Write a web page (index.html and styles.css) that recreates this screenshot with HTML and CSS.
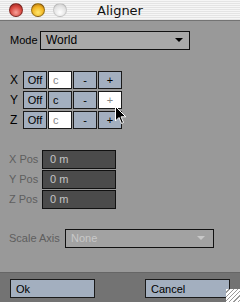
FILE: index.html
```html
<!DOCTYPE html>
<html lang="en">
<head>
  <meta charset="UTF-8">
  <title>Aligner</title>
  <link rel="stylesheet" href="styles.css">
</head>
<body>
  <div class="window">
    <!-- title bar -->
    <div class="titlebar">
      <div class="lights">
        <span class="light red"></span>
        <span class="light yellow"></span>
        <span class="light off"></span>
      </div>
      <div class="title">Aligner</div>
    </div>

    <div class="panel">
      <div class="row mode-row">
        <span class="label mode-label">Mode</span>
        <div class="select mode-select">
          <span>World</span>
          <span class="arrow"></span>
        </div>
      </div>

      <!-- axis buttons -->
      <div class="axes">
        <div class="row axis-row">
          <span class="label axis-label">X</span>
          <span class="btn">Off</span>
          <span class="btn left white dim">c</span>
          <span class="btn">-</span>
          <span class="btn">+</span>
        </div>
        <div class="row axis-row">
          <span class="label axis-label">Y</span>
          <span class="btn">Off</span>
          <span class="btn left">c</span>
          <span class="btn">-</span>
          <span class="btn white dim">+</span>
        </div>
        <div class="row axis-row">
          <span class="label axis-label">Z</span>
          <span class="btn">Off</span>
          <span class="btn left white dim">c</span>
          <span class="btn">-</span>
          <span class="btn">+</span>
        </div>
      </div>

      <!-- positions -->
      <div class="positions">
        <div class="row pos-row">
          <span class="label pos-label">X Pos</span>
          <span class="field">0 m</span>
        </div>
        <div class="row pos-row">
          <span class="label pos-label">Y Pos</span>
          <span class="field">0 m</span>
        </div>
        <div class="row pos-row">
          <span class="label pos-label">Z Pos</span>
          <span class="field">0 m</span>
        </div>
      </div>

      <div class="row scale-row">
        <span class="label scale-label">Scale Axis</span>
        <div class="select scale-select">
          <span>None</span>
          <span class="arrow"></span>
        </div>
      </div>
    </div>

    <div class="footer">
      <span class="btn wide">Ok</span>
      <span class="btn wide">Cancel</span>
      <span class="grip"></span>
    </div>

    <!-- mouse pointer -->
    <svg class="cursor" width="12" height="19" viewBox="0 0 12 19">
      <path d="M0.5 0.5 L0.5 15 L4 11.5 L6.5 17.5 L8.5 16.5 L6 10.8 L10.8 10.8 Z" fill="#000" stroke="#fff" stroke-width="1"/>
    </svg>
  </div>
</body>
</html>
```

FILE: styles.css
```css
* {
  box-sizing: border-box;
}
body {
  margin: 0;
  padding: 0;
  background: #999;
  font-family: 'Liberation Sans', sans-serif;
  font-size: 11px;
}
.window {
  position: relative;
  width: 240px;
  height: 302px;
  background: #999;
  display: flex;
  flex-direction: column;
  overflow: hidden;
}
/* title bar with pinstripes */
.titlebar {
  position: relative;
  height: 21px;
  background: repeating-linear-gradient(#f6f6f6 0, #f6f6f6 1px, #e4e4e4 1px, #e4e4e4 2px);
  border-bottom: 1px solid #737373;
  display: flex;
  align-items: center;
}
.lights {
  display: flex;
  gap: 8px;
  padding-left: 9px;
}
.light {
  width: 14px;
  height: 14px;
  border-radius: 50%;
  border: 1px solid rgba(0,0,0,0.35);
}
.red {
  background: radial-gradient(circle at 50% 70%, #f7a29a 0, #d8483f 55%, #8e1f1a 100%);
}
.yellow {
  background: radial-gradient(circle at 50% 70%, #ffe870 0, #f1b420 55%, #a0600c 100%);
}
.off {
  background: radial-gradient(circle at 50% 70%, #ffffff 0, #e2e2e2 60%, #c2c2c2 100%);
  border-color: rgba(0,0,0,0.12);
}
.title {
  position: absolute;
  left: 0;
  right: 0;
  text-align: center;
  font-family: 'DejaVu Sans', sans-serif;
  font-size: 13px;
  color: #111;
  top: 3px;
}
.panel {
  flex: 1;
  padding: 10px 0 0 9px;
  display: flex;
  flex-direction: column;
}
.row {
  display: flex;
  align-items: center;
  height: 18px;
}
.label {
  color: #000;
  flex-shrink: 0;
}
.mode-label {
  width: 31px;
  padding-left: 1px;
}
.select {
  height: 19px;
  border: 1px solid #111;
  background: #a9a9a9;
  display: flex;
  align-items: center;
  justify-content: space-between;
  padding: 0 5px 0 5px;
  font-size: 12px;
}
.mode-select {
  width: 150px;
  color: #000;
}
.arrow {
  width: 0;
  height: 0;
  border-left: 4px solid transparent;
  border-right: 4px solid transparent;
  border-top: 4px solid #000;
  margin-right: 1px;
}
.axes {
  margin-top: 22px;
  display: flex;
  flex-direction: column;
  gap: 2px;
}
.axis-row {
  gap: 1px;
}
.axis-label {
  width: 13px;
  padding-left: 1px;
  font-size: 12px;
}
.btn {
  width: 24px;
  height: 18px;
  border: 1px solid #1a1a1a;
  background: #a3afbf;
  display: flex;
  align-items: center;
  justify-content: center;
  color: #000;
  font-size: 11px;
}
.btn.left {
  justify-content: flex-start;
  padding-left: 4px;
}
.btn.white {
  background: #fff;
}
.btn.dim {
  color: #888;
}
.positions {
  margin-top: 21px;
  display: flex;
  flex-direction: column;
  gap: 2px;
}
.pos-label {
  width: 33px;
  color: #5e5e5e;
}
.field {
  width: 74px;
  height: 19px;
  border: 1px solid #111;
  background: #4b4b4b;
  color: #c4c4c4;
  padding-left: 7px;
  display: flex;
  align-items: center;
  font-size: 11px;
}
.scale-row {
  margin-top: 21px;
}
.scale-label {
  width: 56px;
  color: #5e5e5e;
}
.scale-select {
  width: 149px;
  background: #a2a2a2;
  color: #c8c8c8;
  font-size: 11px;
}
.scale-select .arrow {
  border-top-color: #c8c8c8;
  margin-right: 3px;
}
.footer {
  position: relative;
  height: 30px;
  background: #737373;
  border-top: 1px solid #666;
  display: flex;
  justify-content: space-between;
  padding: 6px 10px 0 10px;
}
.btn.wide {
  width: 85px;
  height: 19px;
  justify-content: flex-start;
  padding-left: 5px;
}
.grip {
  position: absolute;
  right: 0;
  bottom: 0;
  width: 14px;
  height: 13px;
  background: repeating-linear-gradient(135deg, #fff 0, #fff 2px, #9a9a9a 2px, #9a9a9a 3px);
}
.cursor {
  position: absolute;
  left: 115px;
  top: 106px;
}
```
